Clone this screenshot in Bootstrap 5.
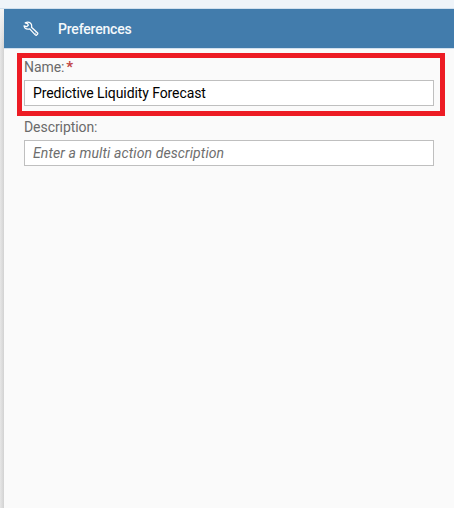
<!DOCTYPE html>
<html lang="en">
<head>
<meta charset="utf-8">
<meta name="viewport" content="width=device-width, initial-scale=1">
<title>Preferences</title>
<link href="https://cdn.jsdelivr.net/npm/bootstrap@5.3.0/dist/css/bootstrap.min.css" rel="stylesheet">
<style>
body{font-family:Roboto,"Liberation Sans",sans-serif;font-size:14px;line-height:18px;background:#e9e9e9;overflow:hidden}
.topline{height:9px;flex:none;background:#eff4f9;border-bottom:1px solid #d1e0ee}
.edge{width:4px;flex:none;background:linear-gradient(to bottom,#f4f4f4,rgba(244,244,244,0) 40px),linear-gradient(to right,#e6e6e6,#d2d2d2)}
.panel{background:#fafafa}
.panel-head{height:39px;background:#427cac;padding-left:19px;gap:19px}
.panel-title{font-size:14px;font-weight:500;line-height:18px;letter-spacing:-.2px;color:#f4f8fb}
.fields{border-top:1px solid #d1e0ee;padding:4px 9px 0 13px}
.marked{border:5px solid #ed1c24;height:63px;padding:0 6px 0 2px}
.plain{padding:2px 11px 0 7px}
.form-label{color:#6a6a6a;margin:0 0 4px;height:18px;display:block;letter-spacing:-.07px;font-size:14px}
.req{color:#c14646;font-weight:700;font-size:15px;line-height:10px;margin-left:2px}
.form-control{height:26px;padding:0 8px;border:1px solid #bfbfbf;border-radius:0;font-size:14px;line-height:24px;color:#000;background:#fff;letter-spacing:-.09px}
.form-control::placeholder{color:#6e6e6e;font-style:italic;opacity:1}
#desc{letter-spacing:.1px}
</style>
<script src="https://cdn.jsdelivr.net/npm/bootstrap@5.3.0/dist/js/bootstrap.bundle.min.js"></script>
</head>
<body>
<div class="d-flex flex-column vh-100">
  <div class="topline"></div>
  <div class="d-flex flex-grow-1">
    <div class="edge"></div>
    <main class="panel flex-grow-1">
      <header class="panel-head d-flex align-items-center text-white">
        <svg width="16" height="16" viewBox="0 0 16 16" fill="none" stroke="#fff" stroke-width="1.25" stroke-linejoin="round" aria-hidden="true">
          <path d="M2.2 1.9 Q5.2 .2 7.6 2.3 Q9.2 3.9 8.5 6.3 L14.6 12 Q15 12.5 14.6 13 L13.5 14.2 Q13 14.5 12.5 14.1 L6.7 7.9 Q3.7 8.7 2 7 Q1.1 6 1 4.8 L3.6 5.7 L5.3 4.3 L4.6 2.6 Z"/>
          <path d="M12.3 12.2 h.8" stroke-width="1"/>
        </svg>
        <h1 class="panel-title mb-0">Preferences</h1>
      </header>
      <form class="fields">
        <div class="marked">
          <label class="form-label" for="name">Name:<span class="req">*</span></label>
          <input class="form-control" id="name" type="text" value="Predictive Liquidity Forecast">
        </div>
        <div class="plain">
          <label class="form-label" for="desc">Description:</label>
          <input class="form-control" id="desc" type="text" placeholder="Enter a multi action description">
        </div>
      </form>
    </main>
  </div>
</div>
</body>
</html>
